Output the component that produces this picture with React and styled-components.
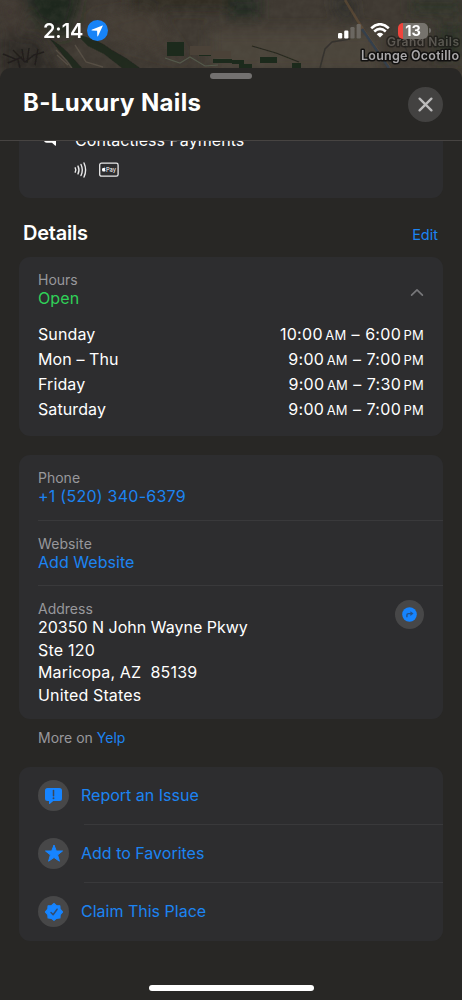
import React from 'react';
import styled, { createGlobalStyle } from 'styled-components';

const GlobalStyle = createGlobalStyle`
  * {
    box-sizing: border-box;
  }

  body {
    margin: 0;
    background: #282725;
    font-family: Inter, "Liberation Sans", sans-serif;
    color: #ffffff;
  }
`;

const Screen = styled.div`
  position: relative;
  display: flex;
  flex-direction: column;
  width: 462px;
  height: 1000px;
  overflow: hidden;
  background: #282725;
`;

const MapArt = styled.svg`
  position: absolute;
  top: 0;
  left: 0;
`;

const StatusBar = styled.div`
  position: relative;
  display: flex;
  justify-content: space-between;
  align-items: center;
  flex: none;
  height: 68px;
  padding: 0 31px 7px 43px;
`;

const StatusGroup = styled.div`
  display: flex;
  align-items: center;
  gap: ${props => props.$gap}px;
`;

const Time = styled.span`
  font-size: 20px;
  font-weight: 600;
  letter-spacing: -0.1px;
`;

const Battery = styled.div`
  display: flex;
  align-items: center;
  gap: 1px;

  &::after {
    content: '';
    width: 2px;
    height: 5px;
    border-radius: 0 2px 2px 0;
    background: #6f6d69;
  }
`;

const BatteryBody = styled.div`
  width: 30px;
  height: 16px;
  border-radius: 5px;
  background: linear-gradient(to right, #f0443c 5px, #76736d 5px);
  font-size: 14.5px;
  font-weight: 700;
  line-height: 16px;
  text-align: center;
`;

const Sheet = styled.main`
  position: relative;
  display: flex;
  flex-direction: column;
  flex: 1;
  min-height: 0;
  border-radius: 11px 11px 0 0;
  background: #282725;
`;

const SheetHeader = styled.header`
  display: flex;
  flex-direction: column;
  flex: none;
  height: 73px;
  padding: 5px 19px 0 23px;
  border-bottom: 1px solid #474442;
`;

const Grabber = styled.div`
  align-self: center;
  width: 42px;
  height: 6px;
  margin-right: 4px;
  border-radius: 3px;
  background: #737170;
`;

const TitleRow = styled.div`
  display: flex;
  justify-content: space-between;
  align-items: center;
  margin-top: 8px;
`;

const Title = styled.h1`
  margin: -4px 0 0;
  font-size: 24px;
  font-weight: 700;
  line-height: 30px;
  letter-spacing: 0.35px;
`;

const CloseButton = styled.button`
  display: grid;
  place-items: center;
  width: 35px;
  height: 35px;
  padding: 0;
  border: 0;
  border-radius: 50%;
  background: #434241;
`;

const Content = styled.div`
  flex: 1;
  min-height: 0;
  padding: 0 19px;
  overflow: hidden;
`;

const Card = styled.section`
  border-radius: 11px;
  background: #2d2d2f;
`;

const PaymentsCard = styled(Card)`
  height: 83px;
  margin-top: -26px;
  padding: 14px 0 0 23px;
`;

const PaymentRow = styled.div`
  display: flex;
  align-items: center;
  gap: 17px;
  height: 22px;
  font-size: 16px;
  letter-spacing: 0.05px;
`;

const PaymentMethods = styled.div`
  display: flex;
  align-items: center;
  gap: 10px;
  margin: 11px 0 0 32px;
`;

const SectionHeader = styled.div`
  display: flex;
  justify-content: space-between;
  align-items: center;
  height: 59px;
  padding: 11px 5px 0 4px;
`;

const SectionTitle = styled.h2`
  margin: 0;
  font-size: 20px;
  font-weight: 600;
  line-height: 24px;
  letter-spacing: -0.25px;
`;

const Link = styled.a`
  display: ${props => (props.$inline ? 'inline' : 'block')};
  color: #1c84f2;
  font-size: ${props => props.$size || 16}px;
  line-height: 18px;
  letter-spacing: ${props => props.$spacing || 0}px;
`;

const EditLink = styled(Link)`
  margin-top: 4px;
`;

const HoursCard = styled(Card)`
  height: 179px;
  padding: 14px 19px 0;
`;

const HoursHeader = styled.div`
  display: flex;
  justify-content: space-between;
  align-items: center;
`;

const Label = styled.div`
  color: #98989c;
  font-size: 14px;
  line-height: 18px;
  letter-spacing: ${props => props.$spacing || 0}px;
`;

const OpenState = styled.div`
  color: #30d158;
  font-size: 16px;
  line-height: 18px;
  letter-spacing: 0.1px;
`;

const Toggle = styled.div`
  display: flex;
  padding-top: 6px;
`;

const HoursList = styled.div`
  margin-top: 15px;
`;

const HoursRow = styled.div`
  display: flex;
  justify-content: space-between;
  height: 25px;
  font-size: 16px;
  line-height: 25px;
`;

const Day = styled.span`
  letter-spacing: 0.1px;
`;

const Hours = styled.span`
  letter-spacing: 0.3px;
  word-spacing: 0.4px;
  white-space: pre;
`;

const Period = styled.span`
  margin-left: 2.5px;
  font-size: 13px;
  letter-spacing: 0.2px;
`;

const ContactCard = styled(Card)`
  height: 264px;
  margin-top: 19px;
  padding-left: 19px;
`;

const ContactRow = styled.div`
  display: flex;
  justify-content: space-between;
  align-items: flex-start;
  height: ${props => props.$height}px;
  padding: 14px 19px 0 0;
  border-bottom: ${props => (props.$last ? 'none' : '1px solid #39393b')};
`;

const AddressLine = styled.div`
  height: 22.5px;
  font-size: 16px;
  line-height: 18px;
  letter-spacing: ${props => props.$spacing}px;
  white-space: pre;
`;

const RoundIcon = styled.span`
  display: grid;
  place-items: center;
  flex: none;
  width: ${props => props.$size}px;
  height: ${props => props.$size}px;
  border-radius: 50%;
  background: #474748;
`;

const MoreOn = styled.div`
  height: 48px;
  padding: 9px 19px 0;
  color: #98989c;
  font-size: 14px;
  line-height: 19px;
`;

const ActionsCard = styled(Card)`
  height: 174px;
  padding-left: 19px;
`;

const Action = styled.div`
  display: flex;
  align-items: center;
  gap: 12px;
  height: 58px;
`;

const ActionIcon = styled(RoundIcon)`
  margin-top: -1px;
`;

const ActionLabel = styled.div`
  position: relative;
  flex: 1;
  height: 58px;
  color: #1c84f2;
  font-size: 16px;
  line-height: 57px;

  &::after {
    content: '';
    display: ${props => (props.$last ? 'none' : 'block')};
    position: absolute;
    right: 0;
    bottom: 0;
    left: 3px;
    height: 1px;
    background: #39393b;
  }
`;

const HomeIndicator = styled.div`
  position: absolute;
  bottom: 9px;
  left: 149px;
  width: 165px;
  height: 6px;
  border-radius: 3px;
  background: #ffffff;
`;

const Map = () => (
  <MapArt width="462" height="84" viewBox="0 0 462 84">
    <defs>
      <filter id="soft" x="-30%" y="-30%" width="160%" height="160%">
        <feGaussianBlur stdDeviation="7" />
      </filter>
      <filter id="edge">
        <feGaussianBlur stdDeviation="0.7" />
      </filter>
      <filter id="rough" x="0" y="0" width="100%" height="100%">
        <feTurbulence type="fractalNoise" baseFrequency="0.12" numOctaves="4" seed="8" />
        <feColorMatrix values="0 0 0 0 0.1  0 0 0 0 0.09  0 0 0 0 0.07  1.2 0 0 0 -0.38" />
      </filter>
    </defs>
    <rect width="462" height="84" fill="#3f3932" />
    <g filter="url(#soft)">
      <path d="M22 -10H82L66 40 34 20Z" fill="#1d251d" />
      <path d="M0 35H40L64 84H0Z" fill="#2e2b27" />
      <path d="M-5 0H25L10 40Z" fill="#403832" />
      <path d="M90 18 150 8 185 60 115 40Z" fill="#453d35" />
      <path d="M130 -8H230V10H130Z" fill="#2f2c24" />
      <path d="M228 -6H260V18H228Z" fill="#232c20" />
      <path d="M210 30H380V72H210Z" fill="#4c443b" />
      <path d="M330 -4H352L356 22 338 18Z" fill="#2d2e2c" />
      <path d="M410 0H462V14H410ZM438 24H462V60H438Z" fill="#2a3025" />
    </g>
    <rect width="462" height="84" filter="url(#rough)" opacity="0.35" />
    <g filter="url(#edge)">
      <path d="M49 38Q63 46 73 58L82 68H72L62 54ZM76 34Q100 40 112 50L126 58 140 68H122L104 54 88 46Z" fill="#1b241c" opacity=".8" />
      <path d="M3 54 18 60 20 68M13 50 25 62 34 55 44 52M29 48 27 63M38 49 35 65M8 63 22 57M22 49 24 62" fill="none" stroke="#211f1c" strokeWidth="1.4" />
      <path d="M252 46 276 53 299 62" fill="none" stroke="#27291f" strokeWidth="1.3" />
      <path d="M56 50 67 61 72 68M75 45 86 62 103 67M57 55 68 65" fill="none" stroke="#6c6255" strokeWidth="1.4" opacity=".5" />
      <path d="M167 42H184V56H167ZM199 50H211V56H199ZM213 59H232V63H213ZM232 60H244V64H232ZM260 57H277V63H260ZM239 64H252V68H239ZM292 63H301V68H292Z" fill="#1a2b1b" />
      <path d="M190 46H211V55H190ZM213 51H231V58H213Z" fill="#4c4238" />
      <path d="M165 58 180 63 190 57 205 66 218 65" fill="none" stroke="#5c6655" strokeWidth="1.2" opacity=".7" />
      <path d="M320 68 325 49 332 42 350 39M402 40 411 60" fill="none" stroke="#35332f" strokeWidth="1.5" />
      <path d="M345 0 364 31 390 68" fill="none" stroke="#715638" strokeWidth="2.5" opacity=".5" />
      <path d="M362 29 389 68" fill="none" stroke="#343f4c" strokeWidth="2.5" />
    </g>
    <g fontFamily="Inter, sans-serif" fontWeight="600" stroke="#121110" strokeWidth="3" strokeLinejoin="round" paintOrder="stroke">
      <text x="387" y="46" fontSize="12" textLength="72" fill="#77736e" opacity=".55">Grand Nails</text>
      <text x="361" y="60" fontSize="12.5" textLength="98" fill="#aaa8aa">Lounge Ocotillo</text>
    </g>
  </MapArt>
);

const LocationIcon = () => (
  <svg width="21" height="21" viewBox="0 0 21 21">
    <circle cx="10.5" cy="10.5" r="10.5" fill="#1783f7" />
    <path d="M15.5 5.4 4.7 9.8Q4 10.5 5 10.6L10.1 10.8 10.3 15.9Q10.5 17 11.1 16.1L15.8 5.8Q15.9 5.2 15.5 5.4Z" fill="#fff" />
  </svg>
);

const SignalIcon = () => (
  <svg width="24" height="16" viewBox="0 0 24 16">
    <rect x="0" y="10" width="4.2" height="5.5" rx="1.2" fill="#fff" />
    <rect x="6.2" y="7.5" width="4.2" height="8" rx="1.2" fill="#fff" />
    <rect x="12.4" y="4" width="4.2" height="11.5" rx="1.2" fill="#6b6761" />
    <rect x="18.6" y="1" width="4.2" height="14.5" rx="1.2" fill="#6b6761" />
  </svg>
);

const WifiIcon = () => (
  <svg width="20" height="15" viewBox="0 0 20 15" fill="none" stroke="#fff" strokeWidth="2.6">
    <path d="M1.2 5.2Q10-2.7 18.8 5.2" />
    <path d="M4.2 8.5Q10 3.3 15.8 8.5" />
    <path d="M10 14.5 6.7 11.2Q10 8.5 13.3 11.2Z" fill="#fff" stroke="none" />
  </svg>
);

const CloseIcon = () => (
  <svg width="15" height="15" viewBox="0 0 15 15" fill="none" stroke="#bdbcbc" strokeWidth="2.3" strokeLinecap="round">
    <path d="M1.6 1.6 13.4 13.4M13.4 1.6 1.6 13.4" />
  </svg>
);

const PaymentIcon = () => (
  <svg width="16" height="18" viewBox="0 0 16 18">
    <path d="M2 2H14V14.2Q14 15 13 14.5L10 11.8H5Q2 12 2 9Z" fill="#fff" />
  </svg>
);

const ContactlessIcon = () => (
  <svg width="15" height="16" viewBox="0 0 15 16" fill="none" stroke="#e9e9ea" strokeWidth="1.4" strokeLinecap="round">
    <path d="M1.2 5.8Q2.5 8 1.2 10.2M4 4.1Q6 8 4 11.9M7 2.5Q9.6 8 7 13.5M10 1Q13.2 8 10 15" />
  </svg>
);

const ApplePayIcon = () => (
  <svg width="20" height="16" viewBox="0 0 20 16">
    <rect x="0.7" y="1.2" width="18.4" height="13" rx="1.8" fill="none" stroke="#e9e9ea" strokeWidth="1.3" />
    <path d="M5.2 6.2C4.4 5.7 3.1 6.1 3 7.5 2.9 8.7 3.8 9.8 4.3 9.6 4.8 9.4 5.1 9.4 5.5 9.6 6 9.7 6.5 9.1 6.6 8.5 5.8 8.1 5.8 7 6.5 6.6 6.2 6.1 5.7 6 5.2 6.2ZM4.8 5.7Q4.9 5 5.7 4.8 5.6 5.6 4.8 5.7Z" fill="#fff" />
    <text x="6.9" y="9.6" fill="#fff" fontFamily="Inter, sans-serif" fontSize="5.8">Pay</text>
  </svg>
);

const ChevronIcon = () => (
  <svg width="14" height="9" viewBox="0 0 14 9" fill="none" stroke="#77777a" strokeWidth="1.7" strokeLinecap="round" strokeLinejoin="round">
    <path d="M1.6 7.2 7 1.8 12.4 7.2" />
  </svg>
);

const DirectionsIcon = () => (
  <svg width="15" height="15" viewBox="0 0 15 15">
    <circle cx="7.5" cy="7.5" r="7.3" fill="#1684ff" />
    <path d="M4.9 10.3V8Q4.9 6.6 6.4 6.6H9" fill="none" stroke="#24518a" strokeWidth="1.4" />
    <path d="M8.4 4.2 11.5 6.6 8.4 9Z" fill="#24518a" />
  </svg>
);

const ReportIcon = () => (
  <svg width="19" height="18" viewBox="0 0 19 18">
    <path d="M3.5 1H15.5Q18 1 18 3.5V11.5Q18 14 15.5 14H9.2L5.8 17Q5 17.4 5 16.4V14H3.5Q1 14 1 11.5V3.5Q1 1 3.5 1Z" fill="#1684ff" />
    <path d="M9.5 3.6V8.8" stroke="#3d4654" strokeWidth="1.5" strokeLinecap="round" />
    <circle cx="9.5" cy="11.2" r="0.95" fill="#3d4654" />
  </svg>
);

const StarIcon = () => (
  <svg width="20" height="19" viewBox="0 0 20 19">
    <path d="M10 1 12.3 7H18.5L13.6 10.9 15.4 17.2 10 13.5 4.6 17.2 6.4 10.9 1.5 7H7.7Z" fill="#1684ff" stroke="#1684ff" strokeLinejoin="round" />
  </svg>
);

const ClaimIcon = () => (
  <svg width="20" height="20" viewBox="0 0 20 20">
    <path d="M10 1.5 12.4 3.7 15.8 3.8 16.1 7.2 18.5 10 16.2 12.6 15.9 16 12.4 16.3 10 18.4 7.4 16.3 4.1 16 3.8 12.6 1.5 10 3.8 7.2 4.1 3.8 7.5 3.7Z" fill="#1684ff" stroke="#1684ff" strokeWidth="1.2" strokeLinejoin="round" />
    <path d="M7 10.5 9.1 12.7 13.1 7.2" fill="none" stroke="#314d72" strokeWidth="1.5" strokeLinecap="round" strokeLinejoin="round" />
  </svg>
);

const hours = [
  { day: 'Sunday', open: '10:00', close: '6:00' },
  { day: 'Mon – Thu', open: '9:00', close: '7:00' },
  { day: 'Friday', open: '9:00', close: '7:30' },
  { day: 'Saturday', open: '9:00', close: '7:00' }
];

const address = [
  { line: '20350 N John Wayne Pkwy', spacing: 0 },
  { line: 'Ste 120', spacing: 0.2 },
  { line: 'Maricopa, AZ  85139', spacing: 0.15 },
  { line: 'United States', spacing: 0.15 }
];

const actions = [
  { label: 'Report an Issue', icon: ReportIcon },
  { label: 'Add to Favorites', icon: StarIcon },
  { label: 'Claim This Place', icon: ClaimIcon }
];

const App = () => (
  <>
    <GlobalStyle />
    <Screen>
      <Map />
      <StatusBar>
        <StatusGroup $gap={4}>
          <Time>2:14</Time>
          <LocationIcon />
        </StatusGroup>
        <StatusGroup $gap={8}>
          <SignalIcon />
          <WifiIcon />
          <Battery>
            <BatteryBody>13</BatteryBody>
          </Battery>
        </StatusGroup>
      </StatusBar>

      <Sheet>
        <SheetHeader>
          <Grabber />
          <TitleRow>
            <Title>B-Luxury Nails</Title>
            <CloseButton aria-label="Close">
              <CloseIcon />
            </CloseButton>
          </TitleRow>
        </SheetHeader>

        <Content>
          <PaymentsCard>
            <PaymentRow>
              <PaymentIcon />
              Contactless Payments
            </PaymentRow>
            <PaymentMethods>
              <ContactlessIcon />
              <ApplePayIcon />
            </PaymentMethods>
          </PaymentsCard>

          <SectionHeader>
            <SectionTitle>Details</SectionTitle>
            <EditLink $size={14.5}>Edit</EditLink>
          </SectionHeader>

          <HoursCard>
            <HoursHeader>
              <div>
                <Label>Hours</Label>
                <OpenState>Open</OpenState>
              </div>
              <Toggle>
                <ChevronIcon />
              </Toggle>
            </HoursHeader>
            <HoursList>
              {hours.map(row => (
                <HoursRow key={row.day}>
                  <Day>{row.day}</Day>
                  <Hours>
                    {row.open}<Period>AM</Period> – {row.close}<Period>PM</Period>
                  </Hours>
                </HoursRow>
              ))}
            </HoursList>
          </HoursCard>

          <ContactCard>
            <ContactRow $height={66}>
              <div>
                <Label>Phone</Label>
                <Link $spacing={0.25}>+1 (520) 340-6379</Link>
              </div>
            </ContactRow>
            <ContactRow $height={65}>
              <div>
                <Label $spacing={0.1}>Website</Label>
                <Link $spacing={0.05}>Add Website</Link>
              </div>
            </ContactRow>
            <ContactRow $height={133} $last>
              <div>
                <Label>Address</Label>
                {address.map(({ line, spacing }) => (
                  <AddressLine key={line} $spacing={spacing}>{line}</AddressLine>
                ))}
              </div>
              <RoundIcon $size={29}>
                <DirectionsIcon />
              </RoundIcon>
            </ContactRow>
          </ContactCard>

          <MoreOn>
            More on <Link $inline $size={14}>Yelp</Link>
          </MoreOn>

          <ActionsCard>
            {actions.map(({ label, icon: Icon }, index) => (
              <Action key={label}>
                <ActionIcon $size={31}>
                  <Icon />
                </ActionIcon>
                <ActionLabel $last={index === actions.length - 1}>
                  {label}
                </ActionLabel>
              </Action>
            ))}
          </ActionsCard>
        </Content>
      </Sheet>
      <HomeIndicator />
    </Screen>
  </>
);

export default App;
